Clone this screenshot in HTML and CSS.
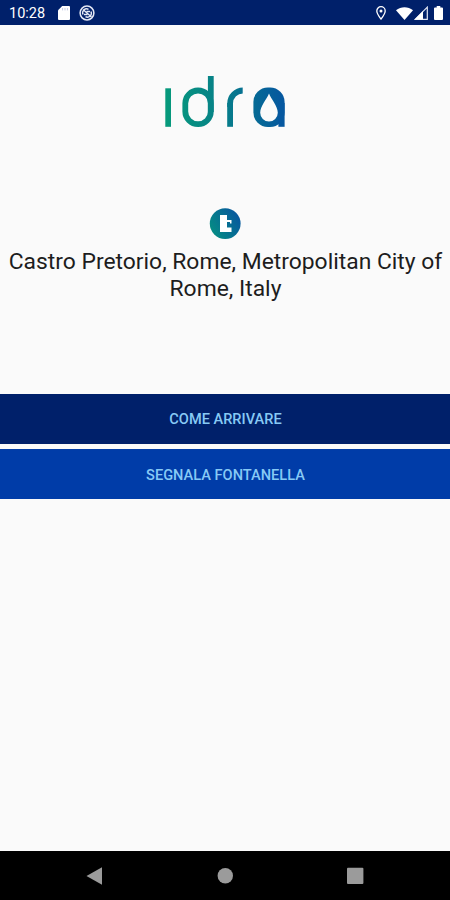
FILE: index.html
```html
<!DOCTYPE html>
<html lang="it">
<head>
<meta charset="utf-8">
<title>Idra</title>
<link rel="stylesheet" href="styles.css">
</head>
<body>
<div class="screen">
  <header class="status">
    <span class="clock">10:28</span>
    <svg class="sd" width="12" height="14" viewBox="0 0 12 14"><path d="M4.2 0H11a1 1 0 0 1 1 1v12a1 1 0 0 1-1 1H1a1 1 0 0 1-1-1V4.2z" fill="#fff"/><path d="M4.6 2v2.4M7 2v2.4M9.4 2v2.4" stroke="#c4cbe2" stroke-width="1"/></svg>
    <svg class="sync" width="16" height="16" viewBox="0 0 16 16" fill="none" stroke="#e4e8f5"><circle cx="8" cy="8" r="6.9" stroke-width="1.5"/><path d="M4 9.500A4 4 0 0 1 9.500 4.300M12 6.500A4 4 0 0 1 6.500 11.700M4 4.500l8.500 7.500M7.500 6.500h3.500M5 9.500h3.500" stroke-width="1.4"/></svg>
    <span class="spacer"></span>
    <svg class="pin" width="10" height="14" viewBox="0 0 10 14" fill="none" stroke="#fff"><path d="M5 13C3 10.300 .8 7.500 .8 4.900a4.200 4.200 0 0 1 8.400 0C9.200 7.500 7 10.300 5 13z" stroke-width="1.3"/><circle cx="5" cy="5" r="1.500" fill="#fff" stroke="none"/></svg>
    <svg class="wifi" width="17" height="13" viewBox="0 0 17 13"><path d="M0 3.200C5-.9 12-.9 17 3.200L8.500 13z" fill="#fff"/></svg>
    <svg class="signal" width="14" height="14" viewBox="0 0 14 14"><path d="M13.300 1.200v12.100H1.200z" fill="none" stroke="#dfe4f2" stroke-width="1.200"/><path d="M9 5v8.500H.5z" fill="#fff"/></svg>
    <svg class="battery" width="9" height="14" viewBox="0 0 9 14"><path d="M2.700 0h3.600v1.500H8a1 1 0 0 1 1 1V13a1 1 0 0 1-1 1H1a1 1 0 0 1-1-1V2.500a1 1 0 0 1 1-1h1.700z" fill="#fff"/></svg>
  </header>
  <main class="content">
    <svg class="logo" role="img" aria-label="idra" width="120" height="52" viewBox="165 76 120 52">
      <defs>
        <linearGradient id="brand" gradientUnits="userSpaceOnUse" x1="165" y1="110" x2="285" y2="100"><stop offset="0" stop-color="#069a7b"/><stop offset=".45" stop-color="#078188"/><stop offset="1" stop-color="#0556a0"/></linearGradient>
        <clipPath id="arm"><rect x="226" y="87" width="16.700" height="20"/></clipPath>
      </defs>
      <g fill="none" stroke="url(#brand)" stroke-width="5.800">
        <rect x="185.300" y="90.500" width="25.500" height="33.700" rx="12.700"/>
        <rect x="230.100" y="90.500" width="27" height="48" rx="13" clip-path="url(#arm)"/>
      </g>
      <g fill="url(#brand)">
        <rect x="165.300" y="88.300" width="5.700" height="38.500"/>
        <rect x="207.900" y="76" width="5.800" height="36"/>
        <rect x="227.200" y="103" width="5.800" height="23.800"/>
        <rect x="253.400" y="87.600" width="31.200" height="39.500" rx="14.500"/>
      </g>
      <rect x="278.400" y="103" width="6.200" height="23.800" fill="#0658a0"/>
      <path d="M269 93.500c2.200 5.500 8.800 12.800 8.800 19.200a8.800 8.800 0 0 1-17.600 0c0-6.400 6.600-13.700 8.800-19.200z" fill="#fafafa"/>
    </svg>
    <svg class="badge" width="32" height="32" viewBox="0 0 32 32">
      <defs><linearGradient id="disc" x1="0" y1=".8" x2="1" y2=".2"><stop offset="0" stop-color="#058f82"/><stop offset="1" stop-color="#0754a0"/></linearGradient></defs>
      <circle cx="16.200" cy="15.600" r="15.400" fill="url(#disc)"/>
      <path d="M11 7h7v5h4.500v3.500H21V14h-3v5.500h4.500V24H11z" fill="#fff"/>
    </svg>
    <h1 class="address">Castro Pretorio, Rome, Metropolitan City of Rome, Italy</h1>
    <div class="actions">
      <button class="action directions">COME ARRIVARE</button>
      <button class="action report">SEGNALA FONTANELLA</button>
    </div>
  </main>
  <nav class="navbar">
    <svg width="18" height="18" viewBox="0 0 18 18"><path d="M.5 9L16 .3v17.400z" fill="#9b9b9b"/></svg>
    <svg width="18" height="18" viewBox="0 0 18 18"><circle cx="9.300" cy="8.800" r="7.700" fill="#9b9b9b"/></svg>
    <svg width="18" height="18" viewBox="0 0 18 18"><rect x="1" y=".7" width="16.400" height="16.400" rx="1" fill="#9b9b9b"/></svg>
  </nav>
</div>
</body>
</html>
```
FILE: styles.css
```css
* { box-sizing: border-box; }
body { margin: 0; font-family: Roboto, "Liberation Sans", sans-serif; }
svg { display: block; flex: none; }
.screen { width: 450px; height: 900px; display: flex; flex-direction: column; background: #fafafa; overflow: hidden; }
.status { height: 25px; background: #00206a; display: flex; align-items: center; padding: 1px 7px 0 9px; color: #fff; }
.clock { font-size: 14.5px; width: 49px; line-height: 22px; padding-top: 2px; }
.sync { margin-left: 9px; }
.spacer { flex: 1; }
.pin { margin-right: 10px; }
.wifi { margin-right: 1px; }
.signal { margin-right: 6px; }
.content { flex: 1; display: flex; flex-direction: column; align-items: center; }
.logo { margin-top: 51px; }
.badge { margin-top: 80px; }
.address { margin: 9px 0 0; padding-left: 1px; width: 100%; height: 54px; font-size: 22.85px; line-height: 26.5px; font-weight: 400; text-align: center; color: #1d1d1d; }
.actions { width: 100%; margin-top: 91px; display: flex; flex-direction: column; gap: 5px; }
.action { height: 50px; border: 0; padding: 0 0 0 1px; font: 500 14.6px/50px Roboto, "Liberation Sans", sans-serif; color: #87c9f5; }
.directions { background: #00206a; }
.report { background: #003ca8; padding-top: 1px; }
.navbar { height: 49px; background: #000; display: flex; justify-content: space-between; align-items: center; padding: 0 86px; }
```
